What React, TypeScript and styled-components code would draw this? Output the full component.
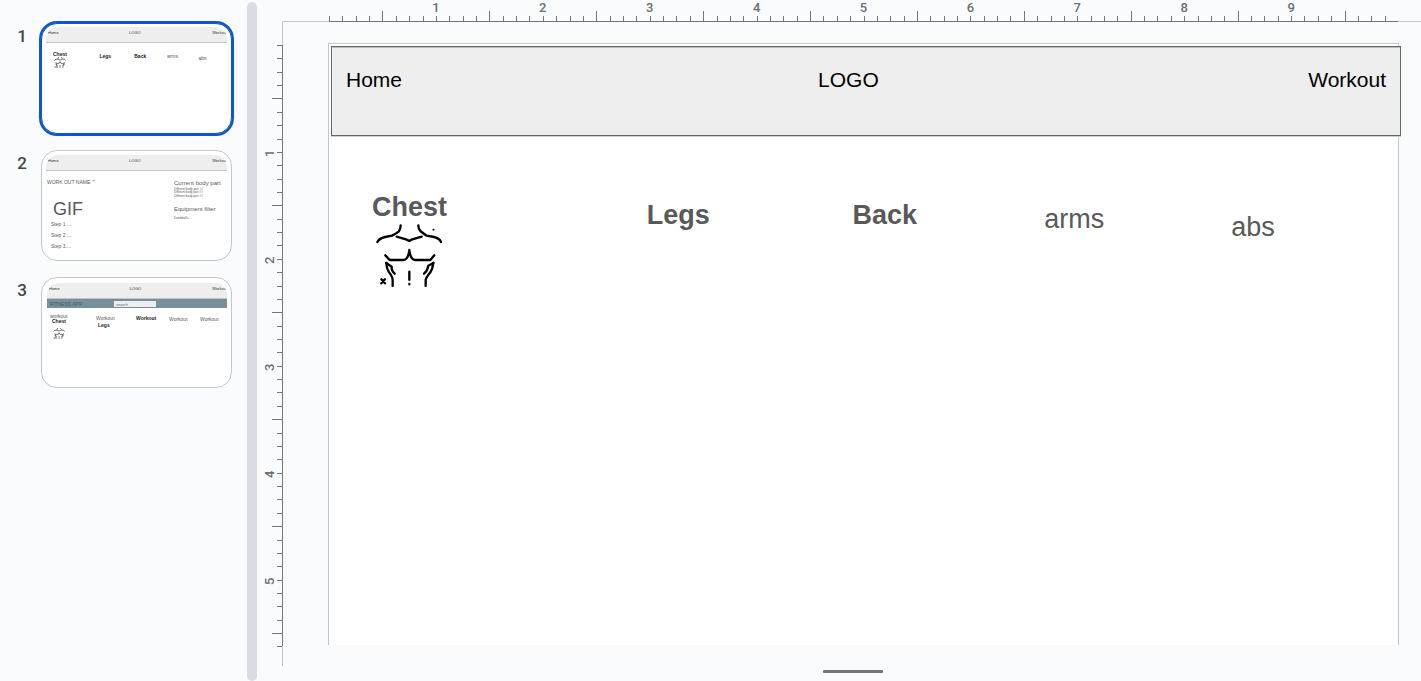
import React from "react";
import styled, { createGlobalStyle, css } from "styled-components";

const GlobalStyle = createGlobalStyle`
  *, *::before, *::after { box-sizing: border-box; }
  body {
    margin: 0;
    background: #f9fbfd;
    font-family: "Liberation Sans", Arial, sans-serif;
    color: #595959;
  }
`;

const Editor = styled.div`
  display: grid;
  grid-template-columns: 247px 10px minmax(0, 1fr);
  min-height: 100vh;
`;

/* ---------- Filmstrip ---------- */

const Filmstrip = styled.ol`
  display: flex;
  flex-direction: column;
  gap: 16px;
  margin: 0;
  padding: 23px 15px 0 0;
  list-style: none;
`;

const FilmstripItem = styled.li`
  display: grid;
  grid-template-columns: 27px 1fr;
  column-gap: 14px;
`;

const SlideNumber = styled.span`
  padding-top: 3px;
  font: 500 17px/20px Roboto, sans-serif;
  color: #444746;
  text-align: right;
`;

const Thumb = styled.button<{ $selected?: boolean; $top: number; $left: number }>`
  display: block;
  height: 111px;
  padding: ${(p) => p.$top}px 4px 4px ${(p) => p.$left}px;
  border: 1px solid #c4c7c5;
  border-radius: 16px;
  background: #fff;
  font: 4px/5px "Liberation Sans", Arial, sans-serif;
  color: #595959;
  text-align: left;
  cursor: pointer;
  ${(p) =>
    p.$selected &&
    css`
      border-color: #0b57d0;
      box-shadow: 0 0 0 2px #0b57d0;
    `}
`;

const ThumbSlide = styled.span`
  display: block;
  height: 100%;
  border-radius: 12px;
  overflow: hidden;
`;

const ThumbHeader = styled.span`
  display: grid;
  grid-template-columns: 81fr 83fr auto;
  height: 16px;
  padding: 3px 0 0 2px;
  border-bottom: 1px solid #c4c4c4;
  background: #eee;
  color: #333;
`;

const ThumbRow = styled.span<{ $top: number; $left: number; $columns: string }>`
  display: grid;
  grid-template-columns: ${(p) => p.$columns};
  padding: ${(p) => p.$top}px 0 0 ${(p) => p.$left}px;
`;

const ThumbText = styled.span<{ $size?: number; $line?: number; $top?: number; $strong?: boolean }>`
  display: block;
  margin-top: ${(p) => p.$top ?? 0}px;
  font-size: ${(p) => p.$size ?? 5}px;
  line-height: ${(p) => p.$line ?? 6}px;
  font-weight: ${(p) => (p.$strong ? 700 : 400)};
  color: ${(p) => (p.$strong ? "#222" : "inherit")};
  white-space: nowrap;
`;

const ThumbBar = styled.span`
  display: grid;
  grid-template-columns: 64px 42px;
  align-items: center;
  height: 9px;
  padding-left: 3px;
  background: #78909c;
  color: #455a64;
`;

const ThumbSearch = styled.span`
  height: 6px;
  padding-left: 2px;
  background: #eee;
  font-size: 4px;
  line-height: 7px;
  color: #666;
`;

const Divider = styled.div`
  margin-top: 2px;
  border-radius: 5px;
  background: #dadce0;
`;

/* ---------- Rulers ---------- */

const Workspace = styled.main`
  display: flex;
  flex-direction: column;
  min-width: 0;
`;

const TopRuler = styled.div`
  display: grid;
  grid-template-columns: 47px minmax(0, 1fr) 23px;
  height: 22px;
  margin-left: 25px;
`;

const RulerEnd = styled.div`
  border-bottom: 1px solid #c4c7c5;
`;

const TopScale = styled.div`
  display: grid;
  grid-template-columns: repeat(80, minmax(0, 1fr));
  align-items: end;
  border-bottom: 1px solid #747775;
`;

const TopTick = styled.div<{ $long: boolean }>`
  display: flex;
  align-items: flex-end;
  height: ${(p) => (p.$long ? 10 : 5)}px;
  border-left: 1px solid #747775;
`;

const TopLabel = styled.span`
  flex: none;
  width: 20px;
  margin: 0 0 5px -11px;
  font: 500 13px/16px Roboto, sans-serif;
  color: #6b6f73;
  text-align: center;
`;

const Body = styled.div`
  display: grid;
  grid-template-columns: 26px minmax(0, 1fr);
`;

const SideRuler = styled.div`
  display: grid;
  grid-template-rows: 23px minmax(0, 1fr) 20px;
`;

const SideEnd = styled.div`
  display: flex;
  justify-content: flex-end;
  border-right: 1px solid #c4c7c5;
`;

const SideScale = styled.div`
  display: grid;
  grid-template-rows: repeat(45, minmax(0, 1fr));
  justify-items: end;
  border-right: 1px solid #747775;
`;

const SideTick = styled.div<{ $long?: boolean }>`
  display: flex;
  justify-content: flex-end;
  width: ${(p) => (p.$long ? 10 : 5)}px;
  border-top: 1px solid #747775;
`;

const SideLabel = styled.span`
  flex: none;
  height: 20px;
  margin: -10px 4px 0 0;
  font: 500 13px/16px Roboto, sans-serif;
  color: #6b6f73;
  text-align: center;
  writing-mode: vertical-rl;
  transform: rotate(180deg);
`;

/* ---------- Slide ---------- */

const Canvas = styled.div`
  padding: 21px 22px 21px 45px;
`;

const Slide = styled.section`
  aspect-ratio: 16 / 9;
  border: 1px solid #c4c7c5;
  border-bottom: 0;
  background: #fff;
`;

const SlideHeader = styled.nav`
  display: grid;
  grid-template-columns: 472fr 490fr auto;
  height: 90px;
  margin: 2px -3px 0 2px;
  padding: 21px 14px 0 14px;
  border: 1px solid #666;
  background: #eee;
  box-shadow: inset 0 1px #bdbdbd, 0 1px #cfcfcf;
  font-size: 21px;
  line-height: 24px;
  color: #000;
`;

const SlideLink = styled.a`
  color: inherit;
  text-decoration: none;
`;

const Parts = styled.div`
  display: grid;
  grid-template-columns: 275fr 206fr 192fr 187fr 167fr;
  padding: 55px 0 0 43px;
  font-size: 27px;
  line-height: 32px;
`;

const Part = styled.div<{ $strong?: boolean; $drop: number }>`
  padding-top: ${(p) => p.$drop}px;
  font-weight: ${(p) => (p.$strong ? 700 : 400)};
`;

const Torso = styled.svg<{ $mini?: boolean }>`
  display: block;
  width: ${(p) => (p.$mini ? 12 : 68)}px;
  height: ${(p) => (p.$mini ? 11 : 64)}px;
  margin-left: ${(p) => (p.$mini ? 1 : 3)}px;
`;

const Handle = styled.div`
  width: 60px;
  height: 3px;
  margin: 4px auto 8px;
  border-radius: 1px;
  background: #757575;
`;

const HandleRow = styled.div`
  display: flex;
  padding-left: 28px;
`;

const COLUMNS = "274fr 206fr 193fr 187fr 168fr";

function TorsoIcon({ mini }: { mini?: boolean }) {
  return (
    <Torso
      $mini={mini}
      viewBox="45 129 204 192"
      fill="none"
      stroke="#000"
      strokeWidth={mini ? 9 : 7}
      strokeLinecap="round"
      strokeLinejoin="round"
      aria-hidden="true"
    >
      <path d="M122 136 Q122 148 116 155 Q108 161 96 167 L75 171 Q58 175 52 186" />
      <path d="M175 136 Q175 148 181 153 Q191 161 200 167 L222 171 Q239 175 243 186" />
      <path d="M110 170 L138 178 L148 183 L157 178 L185 170" />
      <path d="M76 226 L89 240 H131 Q145 238 148 210 Q151 238 165 240 H211 L223 226" />
      <path d="M79 249 Q80 266 86 275 Q98 291 98 300 V318" />
      <path d="M79 249 L95 260 Q94 273 104 281" />
      <path d="M220 249 Q218 266 211 277 Q198 293 197 300 V318" />
      <path d="M220 249 L205 257 Q203 272 192 281" />
      <path d="M148 275 V299 M148 312 V313" />
      <path d="M64 298 L75 310 M75 298 L64 310" />
      <path d="M220 149 H221" strokeWidth="5" />
    </Torso>
  );
}

function MiniHeader() {
  return (
    <ThumbHeader>
      <span>Home</span>
      <span>LOGO</span>
      <span>Workout</span>
    </ThumbHeader>
  );
}

function BodyPartsThumb() {
  return (
    <ThumbSlide>
      <MiniHeader />
      <ThumbRow $top={8} $left={7} $columns={COLUMNS}>
        <span>
          <ThumbText $strong>Chest</ThumbText>
          <TorsoIcon mini />
        </span>
        <ThumbText $strong $top={2}>Legs</ThumbText>
        <ThumbText $strong $top={2}>Back</ThumbText>
        <ThumbText $top={2}>arms</ThumbText>
        <ThumbText $top={4}>abs</ThumbText>
      </ThumbRow>
    </ThumbSlide>
  );
}

function WorkoutThumb() {
  return (
    <ThumbSlide>
      <MiniHeader />
      <ThumbRow $top={8} $left={1} $columns="127fr 53fr">
        <span>
          <ThumbText>WORK OUT NAME “”</ThumbText>
          <ThumbRow $top={14} $left={6} $columns="1fr">
            <ThumbText $size={18} $line={20}>GIF</ThumbText>
          </ThumbRow>
          <ThumbRow $top={2} $left={4} $columns="1fr">
            <ThumbText>Step 1 ....</ThumbText>
            <ThumbText $top={5}>Step 2 ....</ThumbText>
            <ThumbText $top={5}>Step 3....</ThumbText>
          </ThumbRow>
        </span>
        <span>
          <ThumbText $size={6} $line={8}>Current body part</ThumbText>
          <ThumbText $size={3} $line={3} $top={1}>Different body part ##</ThumbText>
          <ThumbText $size={3} $line={3}>Different body part ##</ThumbText>
          <ThumbText $size={3} $line={3} $top={1}>Different body part ##</ThumbText>
          <ThumbText $size={6} $line={8} $top={7}>Equipment filter</ThumbText>
          <ThumbText $size={3} $line={3} $top={4}>Dumbbells....</ThumbText>
        </span>
      </ThumbRow>
    </ThumbSlide>
  );
}

function AppThumb() {
  return (
    <ThumbSlide>
      <MiniHeader />
      <ThumbBar>
        <ThumbText>FITNESS APP</ThumbText>
        <ThumbSearch>search</ThumbSearch>
      </ThumbBar>
      <ThumbRow $top={6} $left={3} $columns="46fr 40fr 33fr 31fr 27fr">
        <span>
          <ThumbText $line={5}>workout</ThumbText>
          <ThumbRow $top={0} $left={2} $columns="1fr">
            <ThumbText $line={5} $strong>Chest</ThumbText>
            <ThumbText $line={4}>&nbsp;</ThumbText>
            <TorsoIcon mini />
          </ThumbRow>
        </span>
        <span>
          <ThumbText $top={1}>Workout</ThumbText>
          <ThumbRow $top={0} $left={2} $columns="1fr">
            <ThumbText $top={1} $strong>Legs</ThumbText>
          </ThumbRow>
        </span>
        <ThumbText $top={1} $strong>Workout</ThumbText>
        <ThumbText $top={2}>Workout</ThumbText>
        <ThumbText $top={2}>Workout</ThumbText>
      </ThumbRow>
    </ThumbSlide>
  );
}

const slides = [
  { top: 3, left: 4, Preview: BodyPartsThumb },
  { top: 4, left: 4, Preview: WorkoutThumb },
  { top: 5, left: 5, Preview: AppThumb },
];

const bodyParts = [
  { name: "Chest", strong: true, drop: 0, icon: true },
  { name: "Legs", strong: true, drop: 8 },
  { name: "Back", strong: true, drop: 8 },
  { name: "arms", drop: 12 },
  { name: "abs", drop: 20 },
];

const range = (n: number) => Array.from({ length: n }, (_, i) => i);

export default function App() {
  return (
    <>
      <GlobalStyle />
      <Editor>
        <Filmstrip>
          {slides.map(({ top, left, Preview }, i) => (
            <FilmstripItem key={i}>
              <SlideNumber>{i + 1}</SlideNumber>
              <Thumb
                type="button"
                $selected={i === 0}
                $top={top}
                $left={left}
                aria-label={`Slide ${i + 1}`}
              >
                <Preview />
              </Thumb>
            </FilmstripItem>
          ))}
        </Filmstrip>
        <Divider />
        <Workspace>
          <TopRuler>
            <RulerEnd />
            <TopScale>
              {range(80).map((n) => (
                <TopTick key={n} $long={n % 8 === 4}>
                  {n > 0 && n % 8 === 0 && <TopLabel>{n / 8}</TopLabel>}
                </TopTick>
              ))}
            </TopScale>
            <RulerEnd />
          </TopRuler>
          <Body>
            <SideRuler>
              <SideEnd />
              <SideScale>
                {range(45).map((n) => (
                  <SideTick key={n} $long={n % 8 === 4}>
                    {n > 0 && n % 8 === 0 && <SideLabel>{n / 8}</SideLabel>}
                  </SideTick>
                ))}
              </SideScale>
              <SideEnd>
                <SideTick />
              </SideEnd>
            </SideRuler>
            <Canvas>
              <Slide>
                <SlideHeader>
                  <SlideLink href="#home">Home</SlideLink>
                  <span>LOGO</span>
                  <SlideLink href="#workout">Workout</SlideLink>
                </SlideHeader>
                <Parts>
                  {bodyParts.map((part) => (
                    <Part key={part.name} $strong={part.strong} $drop={part.drop}>
                      {part.name}
                      {part.icon && <TorsoIcon />}
                    </Part>
                  ))}
                </Parts>
              </Slide>
            </Canvas>
          </Body>
          <HandleRow>
            <Handle />
          </HandleRow>
        </Workspace>
      </Editor>
    </>
  );
}
